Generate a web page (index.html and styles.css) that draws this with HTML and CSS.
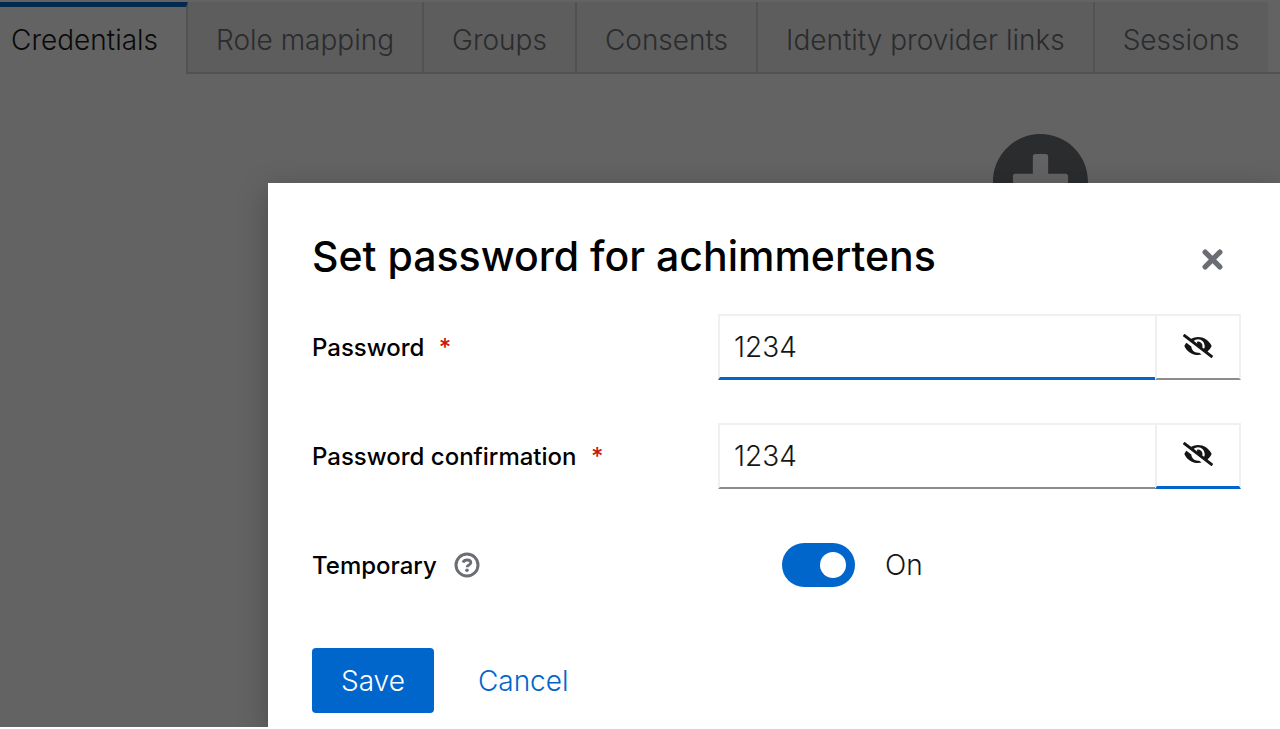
FILE: index.html
```html
<!DOCTYPE html>
<html lang="en">
<head>
  <meta charset="UTF-8" />
  <meta name="viewport" content="width=device-width, initial-scale=1.0"/>
  <title>Credentials</title>
  <link rel="stylesheet" href="styles.css">
</head>
<body>

  <div class="page">
    <nav class="tabs">
      <button class="tab active" type="button">Credentials</button>
      <button class="tab" type="button">Role mapping</button>
      <button class="tab" type="button">Groups</button>
      <button class="tab" type="button">Consents</button>
      <button class="tab" type="button">Identity provider links</button>
      <button class="tab" type="button">Sessions</button>
    </nav>

    <div class="empty-state">
      <svg class="plus-icon" viewBox="8 8 496 496" aria-hidden="true">
        <path fill="currentColor" d="M256 8C119 8 8 119 8 256s111 248 248 248 248-111 248-248S393 8 256 8zm144 276c0 6.600-5.400 12-12 12h-92v92c0 6.600-5.400 12-12 12h-56c-6.600 0-12-5.400-12-12v-92h-92c-6.600 0-12-5.400-12-12v-56c0-6.600 5.400-12 12-12h92v-92c0-6.600 5.400-12 12-12h56c6.600 0 12 5.400 12 12v92h92c6.600 0 12 5.400 12 12v56z"/>
      </svg>
    </div>

    <div class="backdrop"></div>
  </div>

  <div class="modal" role="dialog" aria-labelledby="modalTitle">
    <header class="modal-header">
      <h1 id="modalTitle">Set password for achimmertens</h1>
      <button class="close" type="button" aria-label="Close">
        <svg viewBox="0 0 20 20" aria-hidden="true">
          <path d="M3 3l14 14M17 3L3 17" stroke="currentColor" stroke-width="5" stroke-linecap="round"/>
        </svg>
      </button>
    </header>

    <form class="form">
      <div class="row">
        <label for="password">Password <span class="required">*</span></label>
        <div class="input-group">
          <input class="focused" id="password" type="text" value="1234">
          <button type="button" aria-label="Hide password">
            <svg viewBox="0 0 640 512" aria-hidden="true">
              <path fill="currentColor" d="M320 400c-75.870 0-137.250-58.710-142.900-133.110L72.200 185.820c-13.790 17.300-26.480 35.590-36.720 55.590a32.350 32.350 0 0 0 0 29.190C89.710 376.410 197.070 448 320 448c26.910 0 52.870-4 77.890-10.460L346 397.390a144.130 144.130 0 0 1-26 2.610zm313.820 58.100l-110.550-85.440a331.250 331.250 0 0 0 81.250-102.070 32.350 32.350 0 0 0 0-29.190C550.290 135.590 442.930 64 320 64a308.150 308.150 0 0 0-147.320 37.700L45.460 3.370A16 16 0 0 0 23 6.180L3.370 31.450A16 16 0 0 0 6.180 53.900l588.360 454.730a16 16 0 0 0 22.460-2.810l19.640-25.270a16 16 0 0 0-2.820-22.450zm-183.720-142l-39.300-30.380A94.750 94.750 0 0 0 416 256a94.760 94.760 0 0 0-121.310-92.210A47.650 47.650 0 0 1 304 192a46.640 46.640 0 0 1-1.540 10l-73.610-56.890A142.310 142.310 0 0 1 320 112a143.920 143.920 0 0 1 144 144c0 21.630-5.290 41.790-13.900 60.110z"/>
            </svg>
          </button>
        </div>
      </div>

      <div class="row">
        <label for="confirmation">Password confirmation <span class="required">*</span></label>
        <div class="input-group">
          <input id="confirmation" type="text" value="1234">
          <button class="focused" type="button" aria-label="Hide password">
            <svg viewBox="0 0 640 512" aria-hidden="true">
              <path fill="currentColor" d="M320 400c-75.870 0-137.250-58.710-142.900-133.110L72.200 185.820c-13.790 17.300-26.480 35.590-36.720 55.590a32.350 32.350 0 0 0 0 29.190C89.710 376.410 197.070 448 320 448c26.910 0 52.870-4 77.890-10.460L346 397.390a144.130 144.130 0 0 1-26 2.610zm313.820 58.100l-110.550-85.440a331.250 331.250 0 0 0 81.250-102.070 32.350 32.350 0 0 0 0-29.190C550.290 135.590 442.930 64 320 64a308.150 308.150 0 0 0-147.320 37.700L45.460 3.370A16 16 0 0 0 23 6.180L3.370 31.450A16 16 0 0 0 6.180 53.900l588.360 454.730a16 16 0 0 0 22.460-2.810l19.640-25.270a16 16 0 0 0-2.820-22.450zm-183.720-142l-39.300-30.380A94.750 94.750 0 0 0 416 256a94.760 94.760 0 0 0-121.310-92.210A47.650 47.650 0 0 1 304 192a46.640 46.640 0 0 1-1.540 10l-73.610-56.890A142.310 142.310 0 0 1 320 112a143.920 143.920 0 0 1 144 144c0 21.630-5.290 41.790-13.900 60.110z"/>
            </svg>
          </button>
        </div>
      </div>

      <div class="row switch-row">
        <div class="label-group">
          <label for="temporary">Temporary</label>
          <button class="help" type="button" aria-label="Help">
            <svg viewBox="0 0 26 26" fill="none" aria-hidden="true">
              <circle cx="13" cy="13" r="11" stroke="currentColor" stroke-width="3"/>
              <path d="M9 10.500C9.700 8.700 11.100 8 13 8c2.300 0 3.800 1 3.800 2.800 0 2.300-3.700 2.200-3.700 4.400" stroke="currentColor" stroke-width="2.800"/>
              <circle cx="13" cy="18.300" r="1.800" fill="currentColor"/>
            </svg>
          </button>
        </div>
        <div class="switch">
          <input id="temporary" type="checkbox" checked>
          <label for="temporary">On</label>
        </div>
      </div>

      <div class="actions">
        <button class="save" type="button">Save</button>
        <button class="cancel" type="button">Cancel</button>
      </div>
    </form>
  </div>

</body>
</html>
```
FILE: styles.css
```css
* {
  box-sizing: border-box;
}

body {
  margin: 0;
  height: 100vh;
  overflow: hidden;
  position: relative;
  padding-bottom: 2px;
  background: #fff;
  color: #151515;
  font-family: Inter, "Liberation Sans", sans-serif;
  font-size: 28px;
  font-weight: 300;
}

button,
input {
  font: inherit;
  color: inherit;
  margin: 0;
  padding: 0;
  border: none;
  border-radius: 0;
  background: none;
}

svg {
  display: block;
}

.page {
  position: relative;
  height: 100%;
  padding-top: 2px;
  overflow: hidden;
}

.tabs {
  display: flex;
  box-shadow: inset 0 -2px #d2d2d2;
}

.tab {
  height: 72px;
  padding: 5px 28px 0;
  white-space: nowrap;
  color: #6a6e73;
  background: #f0f0f0;
  border-right: 2px solid #d2d2d2;
  border-bottom: 2px solid #d2d2d2;
}

.tab:last-child {
  border-right: none;
}

.tab.active {
  padding: 0 28px 2px 11px;
  color: #151515;
  background: #fff;
  border-top: 5px solid #06c;
  border-bottom: none;
}

.empty-state {
  display: flex;
  justify-content: center;
  padding: 60px 0 0 800px;
}

.plus-icon {
  width: 95px;
  height: 95px;
  color: #6a6e73;
}

.backdrop {
  position: absolute;
  inset: 0;
  background: rgba(3, 3, 3, 0.62);
}

.modal {
  position: absolute;
  top: 183px;
  left: 268px;
  right: 0;
  bottom: 0;
  padding: 43px 39px 0 44px;
  background: #fff;
}

.page::after {
  content: "";
  position: absolute;
  top: 183px;
  left: 268px;
  right: 0;
  bottom: 0;
  box-shadow: 0 8px 28px rgba(3, 3, 3, 0.25);
}

.modal-header {
  display: flex;
  justify-content: space-between;
  align-items: center;
  height: 60px;
  padding-right: 18px;
}

h1 {
  margin: 0;
  font-size: 41px;
  font-weight: 500;
  color: #000;
}

.close {
  padding-top: 6px;
  color: #6a6e73;
}

.close svg {
  width: 21px;
  height: 21px;
}

.form {
  display: flex;
  flex-direction: column;
  gap: 43px;
  padding-top: 28px;
}

.row {
  display: grid;
  grid-template-columns: 406px minmax(0, 1fr);
  align-items: center;
}

.row > label,
.label-group {
  font-size: 24px;
  font-weight: 500;
  color: #000;
}

.required {
  margin-left: 8px;
  color: #c9190b;
}

.input-group {
  display: flex;
  height: 66px;
}

.input-group input,
.input-group button {
  border: 2px solid #f0f0f0;
  border-bottom: 2px solid #8a8d90;
}

.input-group input {
  flex: 1;
  min-width: 0;
  padding-left: 14px;
  border-right: none;
  outline: none;
}

.input-group button {
  display: flex;
  align-items: center;
  justify-content: center;
  width: 86px;
  padding-bottom: 3px;
}

.input-group .focused {
  border-bottom: 3px solid #06c;
}

.input-group svg {
  width: 30px;
  height: 24px;
}

.switch-row {
  padding: 11px 0 18px;
}

.label-group,
.switch {
  display: flex;
  align-items: center;
}

.label-group {
  gap: 17px;
}

.help {
  color: #6a6e73;
}

.help svg {
  width: 26px;
  height: 26px;
}

.switch {
  gap: 30px;
  padding-left: 64px;
}

.switch input {
  appearance: none;
  display: flex;
  align-items: center;
  justify-content: flex-end;
  width: 73px;
  height: 44px;
  padding-right: 9px;
  border-radius: 22px;
  background: #06c;
}

.switch input::before {
  content: "";
  width: 26px;
  height: 26px;
  border-radius: 50%;
  background: #fff;
}

.switch input:not(:checked) {
  justify-content: flex-start;
  padding: 0 0 0 9px;
  background: #8a8d90;
}

.actions {
  display: flex;
  gap: 44px;
}

.save {
  height: 65px;
  padding: 0 29px;
  border-radius: 4px;
  color: #fff;
  background: #06c;
}

.cancel {
  color: #06c;
}
```
